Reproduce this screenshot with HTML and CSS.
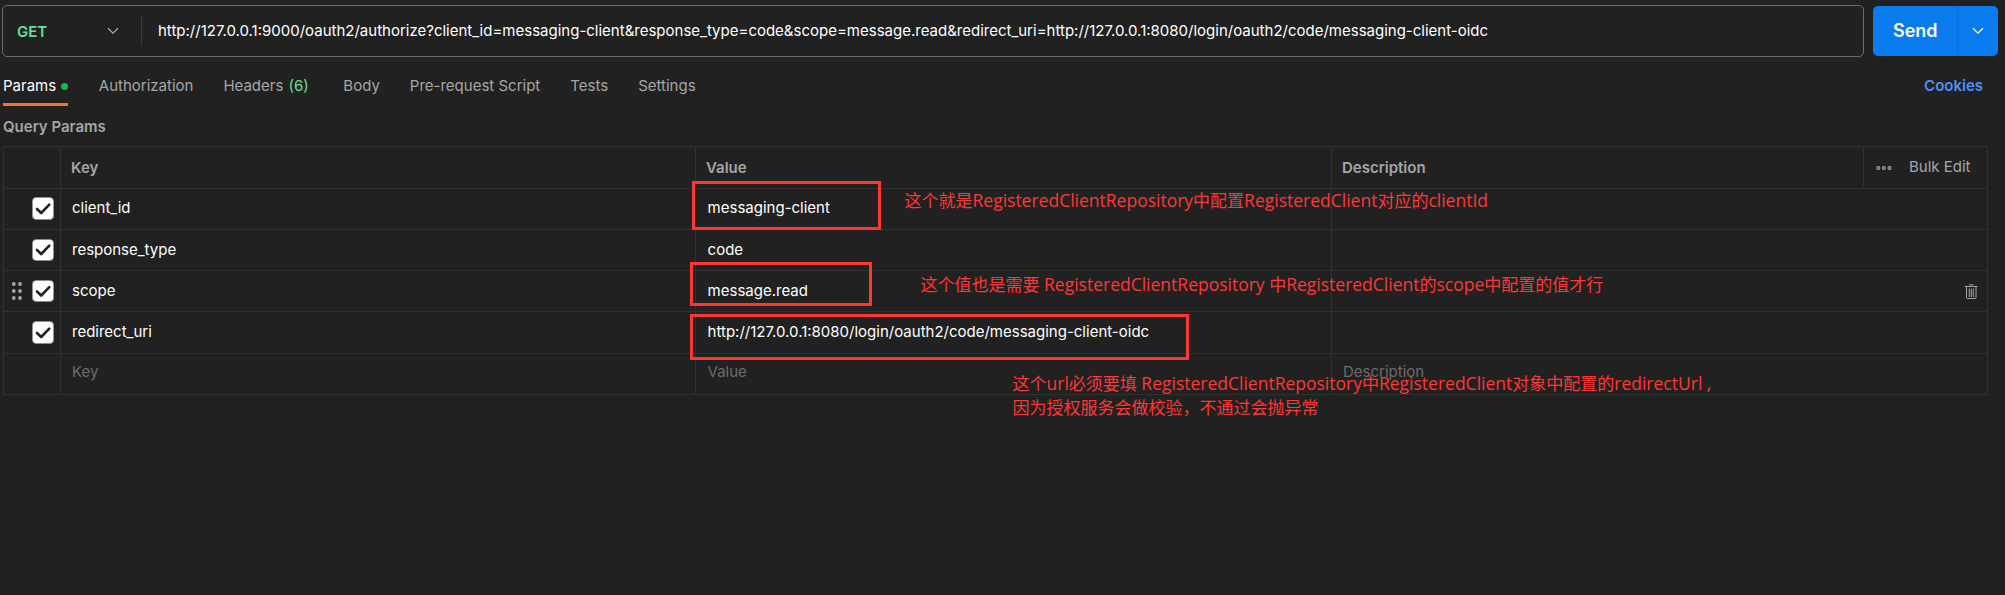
FILE: index.html
```html
<!DOCTYPE html>
<html lang="zh-CN">
<head>
<meta charset="utf-8">
<title>Request</title>
<link rel="stylesheet" href="styles.css">
</head>
<body>
<div class="request">
  <div class="url-row">
    <div class="url-bar">
      <div class="method">GET
        <svg class="chevron" width="12" height="8" viewBox="0 0 12 8"><path d="M1 1.2 6 6.2 11 1.2"/></svg>
      </div>
      <div class="url">http://127.0.0.1:9000/oauth2/authorize?client_id=messaging-client&amp;response_type=code&amp;scope=message.read&amp;redirect_uri=http://127.0.0.1:8080/login/oauth2/code/messaging-client-oidc</div>
    </div>
    <div class="send">
      <div class="send-label">Send</div>
      <div class="send-more"><svg class="chevron" width="12" height="8" viewBox="0 0 12 8"><path d="M1 1.2 6 6.2 11 1.2"/></svg></div>
    </div>
  </div>

  <div class="tabs">
    <div class="tab active">Params<i class="dot"></i></div>
    <div class="tab">Authorization</div>
    <div class="tab headers">Headers <span class="count">(6)</span></div>
    <div class="tab">Body</div>
    <div class="tab">Pre-request Script</div>
    <div class="tab">Tests</div>
    <div class="tab">Settings</div>
    <div class="cookies">Cookies</div>
  </div>

  <div class="title">Query Params</div>

  <div class="table">
    <div class="row head">
      <div class="cell"></div><div class="cell">Key</div><div class="cell">Value</div><div class="cell">Description</div>
      <div class="cell tools">
        <svg class="more" width="16" height="6" viewBox="0 0 16 6"><circle cx="2.2" cy="3" r="1.4"/><circle cx="7.8" cy="3" r="1.4"/><circle cx="13.4" cy="3" r="1.4"/></svg>
        <span class="bulk">Bulk Edit</span>
      </div>
    </div>
    <div class="row r1">
      <div class="cell check"><svg class="box" width="22" height="23" viewBox="0 0 22 23"><rect x=".4" y=".4" width="21.2" height="22.2" rx="4"/><path d="M5 12 9.2 16 17.3 7.6"/></svg></div>
      <div class="cell">client_id</div><div class="cell">messaging-client</div><div class="cell"></div>
    </div>
    <div class="row r2">
      <div class="cell check"><svg class="box" width="22" height="22" viewBox="0 0 22 22"><rect x=".4" y=".4" width="21.2" height="21.2" rx="4"/><path d="M5 11 9.2 15 17.3 6.6"/></svg></div>
      <div class="cell">response_type</div><div class="cell">code</div><div class="cell"></div>
    </div>
    <div class="row r3">
      <div class="cell check"><svg class="grip" width="12" height="20" viewBox="0 0 12 20"><circle cx="2.8" cy="3" r="1.9"/><circle cx="9" cy="3" r="1.9"/><circle cx="2.8" cy="10" r="1.9"/><circle cx="9" cy="10" r="1.9"/><circle cx="2.8" cy="17" r="1.9"/><circle cx="9" cy="17" r="1.9"/></svg><svg class="box" width="22" height="22" viewBox="0 0 22 22"><rect x=".4" y=".4" width="21.2" height="21.2" rx="4"/><path d="M5 11.5 9.2 15.5 17.3 7.1"/></svg></div>
      <div class="cell">scope</div><div class="cell">message.read</div>
      <div class="cell last"><svg class="trash" width="14" height="16" viewBox="0 0 14 16"><path d="M.8 2.5h12.700M5 .8h4.500M2.500 3v10.500q0 1 1 1h7.500q1 0 1-1V3M5.300 4.500v8.500M7.300 4.500v8.500M9.300 4.500v8.500"/></svg></div>
    </div>
    <div class="row r4">
      <div class="cell check"><svg class="box" width="22" height="23" viewBox="0 0 22 23"><rect x=".4" y=".4" width="21.2" height="22.2" rx="4"/><path d="M5 12 9.2 16 17.3 7.6"/></svg></div>
      <div class="cell">redirect_uri</div><div class="cell">http://127.0.0.1:8080/login/oauth2/code/messaging-client-oidc</div><div class="cell"></div>
    </div>
    <div class="row empty">
      <div class="cell"></div><div class="cell">Key</div><div class="cell">Value</div><div class="cell">Description</div>
    </div>
  </div>
</div>

<div class="mark mark-client"></div>
<div class="mark mark-scope"></div>
<div class="mark mark-redirect"></div>
<div class="note note-client">这个就是<span>RegisteredClientRepository</span>中配置<span>RegisteredClient</span>对应的<span>clientId</span></div>
<div class="note note-scope">这个值也是需要<span> RegisteredClientRepository </span>中<span>RegisteredClient</span>的<span>scope</span>中配置的值才行</div>
<div class="note note-redirect">这个<span>url</span>必须要填<span> RegisteredClientRepository</span>中<span>RegisteredClient</span>对象中配置的<span>redirectUrl ,</span><br>因为授权服务会做校验，不通过会抛异常</div>
</body>
</html>
```
FILE: styles.css
```css
* { box-sizing: border-box; }

body {
  margin: 0;
  width: 2005px;
  height: 595px;
  overflow: hidden;
  position: relative;
  background: #212121;
  color: #fff;
  font: 15px/20px Inter, "Noto Sans CJK SC", sans-serif;
  white-space: nowrap;
}

.request { padding: 5px 0 0 2px; }

.url-row { display: flex; gap: 9px; }

.url-bar {
  display: flex;
  align-items: center;
  width: 1862px;
  height: 52px;
  border: 1px solid #6b6b6b;
  border-radius: 5px;
}

.method {
  display: flex;
  justify-content: space-between;
  align-items: center;
  width: 139px;
  height: 30px;
  padding: 2px 22px 0 14px;
  border-right: 1px solid #3a3a3a;
  color: #6bdd9a;
  font-weight: 600;
}

.chevron { fill: none; stroke: #a6a6a6; stroke-width: 1.3; }
.method .chevron { margin-top: -2px; }

.url { padding-left: 16px; }

.send {
  display: flex;
  width: 125px;
  height: 50px;
  margin-top: 1px;
  border-radius: 5px;
  background: #097bed;
  overflow: hidden;
}

.send-label {
  width: 84px;
  padding-left: 20px;
  font-size: 18px;
  font-weight: 600;
  line-height: 50px;
}

.send-more {
  display: flex;
  flex: 1;
  align-items: center;
  justify-content: center;
  border-left: 1px solid #0a6fd6;
}
.send-more .chevron { stroke: #fff; }

.tabs {
  display: flex;
  gap: 30px;
  height: 49px;
  padding: 0 22px 0 1px;
  color: #a6a6a6;
}

.tab { padding-top: 19px; }

.tab.active {
  display: flex;
  align-items: flex-start;
  width: 65px;
  justify-content: space-between;
  border-bottom: 3px solid #ff6c37;
  color: #fff;
}
.tab.active + .tab { margin-left: .8px; }

.dot { width: 7px; height: 7px; margin-top: 7px; border-radius: 50%; background: #0cbb52; }
.headers { margin-right: 4.5px; }
.count { color: #6bdd9a; margin-left: 1px; }

.cookies { margin-left: auto; padding-top: 19px; color: #4a93f5; font-weight: 600; }

.title { height: 40px; padding: 11px 0 0 1px; color: #a6a6a6; font-weight: 600; }

.table { width: 1985px; margin-left: 1px; border: 1px solid #303030; }

.row {
  display: grid;
  grid-template-columns: 56px 635px 636px 1fr;
  height: 41px;
  border-bottom: 1px solid #303030;
}
.row:last-child { border-bottom: 0; }

.cell { padding: 9px 0 0 11px; border-left: 1px solid #303030; }
.cell:first-child { border-left: 0; }
.cell:nth-child(3) { padding-left: 11.6px; }

.head { grid-template-columns: 56px 635px 636px 532px 1fr; height: 42px; color: #a6a6a6; font-weight: 600; }
.head .cell { padding: 11px 0 0 10px; }
.head .cell, .r4 .cell { margin-bottom: 1px; }
.head .tools { display: flex; gap: 17px; padding: 10px 0 0 12px; font-weight: 400; }
.more { margin-top: 8px; fill: none; stroke: #a6a6a6; stroke-width: 1.2; }

.row .check { display: flex; gap: 9px; justify-content: flex-end; padding: 8px 6px 0 0; }
.r2 .check, .r3 .check, .r4 .check { padding-top: 9px; }
.r4 { height: 42px; }
.r2 .cell:not(.check), .r3 .cell:not(.check), .r4 .cell:not(.check) { padding-top: 10px; }
.box rect { fill: #fff; stroke: #8a8a8a; stroke-width: .8; }
.box path { fill: none; stroke: #212121; stroke-width: 2.6; stroke-linecap: round; stroke-linejoin: round; }
.grip { margin-top: 1px; fill: #a6a6a6; }
.row .last { display: flex; justify-content: flex-end; padding: 13px 9px 0 0; }
.r3 .cell.last { padding-top: 13px; }
.trash { fill: none; stroke: #a6a6a6; stroke-width: 1; }
.empty { height: 40px; color: #6b6b6b; }
.empty .cell { padding-top: 8px; }

/* Annotations drawn over the table */
.mark { position: absolute; border: 3px solid #ff3636; }
.mark-client { left: 692px; top: 181px; width: 189px; height: 49px; }
.mark-scope { left: 690px; top: 262px; width: 182px; height: 44px; }
.mark-redirect { left: 690px; top: 314px; width: 499px; height: 46px; }

.note {
  position: absolute;
  color: #ff3636;
  font: 17px/24px "Noto Sans CJK SC", sans-serif;
}
.note span { font-family: "Open Sans", "Noto Sans", sans-serif; font-size: 17.5px; line-height: 20px; white-space: pre; }
.note-client { left: 904.5px; top: 188px; }
.note-scope { left: 920.5px; top: 272px; }
.note-redirect { left: 1012.5px; top: 371px; }
```
